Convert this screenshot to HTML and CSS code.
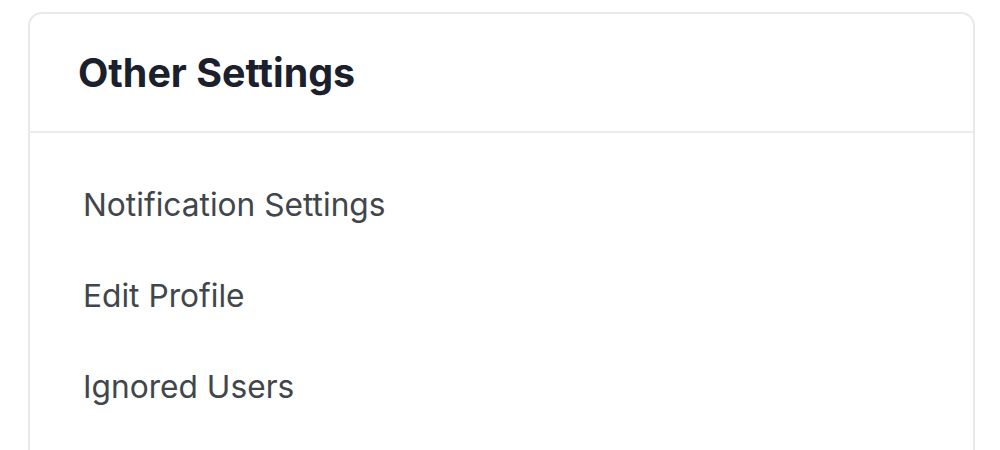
FILE: index.html
```html
<!DOCTYPE html>
<html>
<head>
<meta charset="utf-8">
<link rel="stylesheet" href="styles.css">
</head>
<body>
<div class="card">
  <div class="card-header"><h2 class="title">Other Settings</h2></div>
  <ul class="menu">
    <li class="item">Notification Settings</li>
    <li class="item">Edit Profile</li>
    <li class="item">Ignored Users</li>
  </ul>
</div>
</body>
</html>
```
FILE: styles.css
```css
html, body { margin: 0; padding: 0; background: #fff; }
body { font-family: Inter, "Noto Sans", sans-serif; height: 450px; overflow: hidden; }
.card {
  margin: 12px 0 0 28px;
  width: 947px;
  height: 460px;
  box-sizing: border-box;
  border: 2px solid #e8e9ec;
  border-radius: 14px;
  background: #fff;
}
.card-header {
  height: 117px;
  border-bottom: 2px solid #ececef;
  display: flex;
  align-items: center;
  padding-left: 48px;
}
.title {
  margin: 0;
  font-size: 39.4px;
  font-weight: 700;
  color: #1a202c;
}
.menu { list-style: none; margin: 0; padding: 26px 0 0 53px; }
.item {
  height: 91px;
  display: flex;
  align-items: center;
  font-size: 31.7px;
  color: #41464b;
}
```
